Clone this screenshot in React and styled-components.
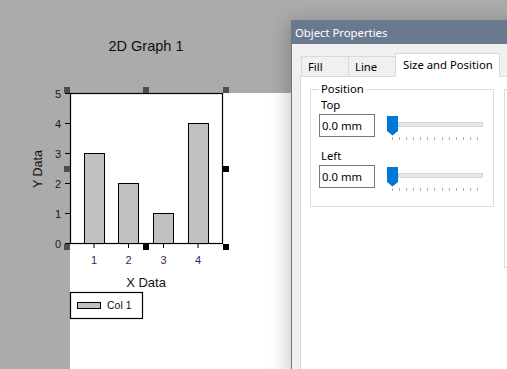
import React from 'react';
import styled, {createGlobalStyle} from 'styled-components';

const GlobalStyle = createGlobalStyle`
    html, body {
        margin: 0;
        padding: 0;
    }

    body {
        width: 507px;
        height: 369px;
        overflow: hidden;
        background: #ababab;
    }
`;

const Workspace = styled.div`
    position: relative;
    width: 507px;
    height: 369px;
    box-sizing: border-box;
    padding: 93px 0 0 70px;
    display: flex;
    overflow: hidden;
    background: #ababab;
    font-family: "Liberation Sans", Arial, sans-serif;
`;

const Page = styled.div`
    flex: 1;
    background: #fff;
`;

const GraphCanvas = styled.svg`
    position: absolute;
    left: 0;
    top: 0;
    font-family: "Liberation Sans", Arial, sans-serif;
`;

const Window = styled.div`
    position: absolute;
    left: 291px;
    top: 20px;
    width: 240px;
    height: 360px;
    display: flex;
    flex-direction: column;
    background: #f0f0f0;
    border-left: 1px solid #6a7990;
    box-shadow: -3px 2px 18px rgba(0, 0, 0, 0.22);
    font-family: "Segoe UI", "Noto Sans", "Open Sans", sans-serif;
    font-size: 11.3px;
    color: #000;
`;

const TitleBar = styled.div`
    height: 24px;
    display: flex;
    align-items: center;
    padding-left: 3px;
    background: #6a7990;
    color: #fff;
`;

const Body = styled.div`
    flex: 1;
    display: flex;
    flex-direction: column;
    padding: 9px 0 0 8px;
`;

const TabRow = styled.div`
    position: relative;
    z-index: 1;
    height: 24px;
    margin-bottom: -1px;
    padding-left: 1px;
    display: flex;
    align-items: flex-end;
`;

const Tab = styled.div`
    box-sizing: border-box;
    width: ${p => p.$w}px;
    height: ${p => (p.$active ? 24 : 21)}px;
    margin-right: -1px;
    display: flex;
    align-items: center;
    padding-left: ${p => (p.$active ? 7 : 6)}px;
    padding-bottom: ${p => (p.$active ? 2 : 0)}px;
    border: 1px solid #d9d9d9;
    border-bottom-color: ${p => (p.$active ? '#fff' : '#d9d9d9')};
    background: ${p => (p.$active ? '#fff' : '#f0f0f0')};
    position: relative;
    z-index: ${p => (p.$active ? 2 : 1)};
`;

const Panel = styled.div`
    flex: 1;
    display: flex;
    align-items: flex-start;
    gap: 10px;
    padding: 5px 0 0 9px;
    background: #fff;
    border: 1px solid #d9d9d9;
`;

const GroupBox = styled.fieldset`
    box-sizing: border-box;
    flex-shrink: 0;
    width: ${p => p.$w}px;
    height: ${p => p.$h}px;
    margin: ${p => (p.$plain ? '7px 0 0 0' : '0')};
    padding: 0 0 0 8px;
    border: 1px solid #dcdcdc;
`;

const Legend = styled.legend`
    padding: 0 2px;
    line-height: 14px;
    font-size: 11.3px;
`;

const FieldLabel = styled.div`
    line-height: 14px;
    margin: ${p => p.$top}px 0 2px 2px;
`;

const FieldRow = styled.div`
    display: flex;
    align-items: flex-start;
`;

const ValueInput = styled.div`
    box-sizing: border-box;
    width: 56px;
    height: 23px;
    display: flex;
    align-items: center;
    padding-left: 2px;
    border: 1px solid #7a7a7a;
    background: #fff;
`;

const SliderWrap = styled.div`
    position: relative;
    width: 97px;
    height: 26px;
    margin-left: 12px;
`;

const Track = styled.div`
    box-sizing: border-box;
    width: 85px;
    height: 5px;
    margin: 8px 0 0 11px;
    background: #e7e7e7;
    border: 1px solid #d6d6d6;
`;

const Thumb = styled.svg`
    position: absolute;
    left: 0;
    top: 2px;
`;

const Ticks = styled.div`
    width: 86px;
    height: 3px;
    margin: 10px 0 0 5px;
    display: flex;
    justify-content: space-between;
`;

const Tick = styled.span`
    width: 1px;
    height: 3px;
    background: #b0b0b0;
`;

const bars = [
    {x: 84, v: 3},
    {x: 118, v: 2},
    {x: 153, v: 1},
    {x: 188, v: 4},
];

const xTicks = [94, 128.5, 163.5, 198];

const handles = [
    {x: 64, y: 87, c: '#4d4d4d'},
    {x: 143, y: 87, c: '#4d4d4d'},
    {x: 223, y: 87, c: '#4d4d4d'},
    {x: 64, y: 166, c: '#4d4d4d'},
    {x: 223, y: 166, c: '#000'},
    {x: 64, y: 244, c: '#4d4d4d'},
    {x: 143, y: 244, c: '#000'},
    {x: 223, y: 244, c: '#000'},
];

const yOf = v => 243.5 - 30 * v;

function Graph() {
    return (
        <GraphCanvas width="290" height="369" viewBox="0 0 290 369">
            <text x="146" y="51" fontSize="14.5" textAnchor="middle" fill="#111">2D Graph 1</text>

            <rect x="70.5" y="93.5" width="152" height="150" fill="#fff" stroke="#000" strokeWidth="1.2"/>

            {bars.map(b => (
                <rect key={b.x} x={b.x + 0.5} y={yOf(b.v)} width="20" height={30 * b.v}
                      fill="#c0c0c0" stroke="#000" strokeWidth="1"/>
            ))}

            {[0, 1, 2, 3, 4, 5].map(v => (
                <g key={v}>
                    <line x1="65" x2="70" y1={yOf(v)} y2={yOf(v)} stroke="#000" strokeWidth="1"/>
                    <text x="61" y={yOf(v) + 4} fontSize="11" textAnchor="end" fill="#1a1a1a">{v}</text>
                </g>
            ))}

            {xTicks.map((x, i) => (
                <g key={x}>
                    <line x1={x} x2={x} y1="244" y2="248" stroke="#000" strokeWidth="1"/>
                    <text x={x} y="264" fontSize="11" textAnchor="middle" fill="#4a1a58">{i + 1}</text>
                </g>
            ))}

            <text x="146" y="287" fontSize="13" textAnchor="middle" fill="#111">X Data</text>
            <text transform="translate(42 169) rotate(-90)" fontSize="12.5" textAnchor="middle" fill="#111">Y Data</text>

            <rect x="70.5" y="292.5" width="72" height="26" fill="#fff" stroke="#000" strokeWidth="1.2"/>
            <rect x="77.5" y="302.5" width="23" height="6" fill="#c0c0c0" stroke="#000" strokeWidth="1"/>
            <text x="107" y="308.5" fontSize="10.5" fill="#111">Col 1</text>

            {handles.map(h => (
                <rect key={`${h.x}-${h.y}`} x={h.x} y={h.y} width="6" height="6" fill={h.c}/>
            ))}
        </GraphCanvas>
    );
}

function Slider() {
    return (
        <SliderWrap>
            <Track/>
            <Thumb width="11" height="20" viewBox="0 0 11 20">
                <polygon points="0,0 11,0 11,15 5.5,19.5 0,15" fill="#0078d7"/>
            </Thumb>
            <Ticks>
                {Array.from({length: 13}).map((_, i) => <Tick key={i}/>)}
            </Ticks>
        </SliderWrap>
    );
}

function PropertiesDialog() {
    return (
        <Window>
            <TitleBar>Object Properties</TitleBar>
            <Body>
                <TabRow>
                    <Tab $w={48}>Fill</Tab>
                    <Tab $w={48}>Line</Tab>
                    <Tab $w={105} $active>Size and Position</Tab>
                </TabRow>
                <Panel>
                    <GroupBox $w={184} $h={125}>
                        <Legend>Position</Legend>
                        <FieldLabel $top={2}>Top</FieldLabel>
                        <FieldRow>
                            <ValueInput>0.0 mm</ValueInput>
                            <Slider/>
                        </FieldRow>
                        <FieldLabel $top={9}>Left</FieldLabel>
                        <FieldRow>
                            <ValueInput>0.0 mm</ValueInput>
                            <Slider/>
                        </FieldRow>
                    </GroupBox>
                    <GroupBox $w={100} $h={179} $plain/>
                </Panel>
            </Body>
        </Window>
    );
}

export default function App() {
    return (
        <>
            <GlobalStyle/>
            <Workspace>
                <Page/>
                <Graph/>
                <PropertiesDialog/>
            </Workspace>
        </>
    );
}
